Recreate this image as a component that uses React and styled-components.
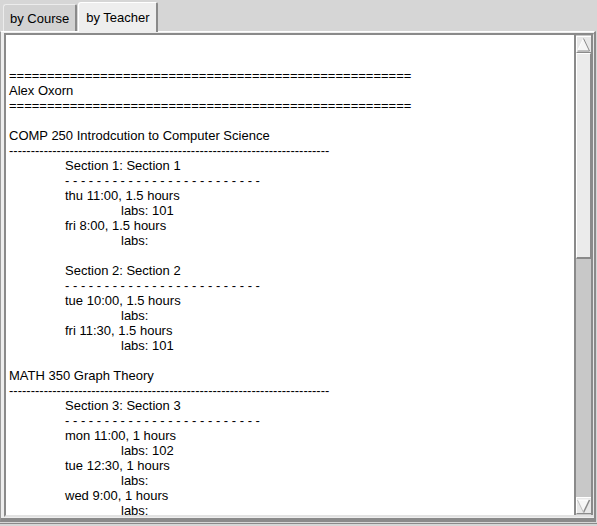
import React, {useState} from 'react';
import styled, {createGlobalStyle} from 'styled-components';

const Global = createGlobalStyle`
  html, body {
    margin: 0;
    padding: 0;
    overflow: hidden;
  }
  body {
    font-family: 'Liberation Sans', Arial, sans-serif;
  }
`

const eq = '='.repeat(53);
const dash = '-'.repeat(74);
const spaced = Array(25).fill('-').join(' ');

const report = [
  '',
  '',
  eq,
  'Alex Oxorn',
  eq,
  '',
  'COMP 250 Introdcution to Computer Science',
  dash,
  '\tSection 1: Section 1',
  '\t' + spaced,
  '\tthu 11:00, 1.5 hours',
  '\t\tlabs: 101',
  '\tfri 8:00, 1.5 hours',
  '\t\tlabs:',
  '',
  '\tSection 2: Section 2',
  '\t' + spaced,
  '\ttue 10:00, 1.5 hours',
  '\t\tlabs:',
  '\tfri 11:30, 1.5 hours',
  '\t\tlabs: 101',
  '',
  'MATH 350 Graph Theory',
  dash,
  '\tSection 3: Section 3',
  '\t' + spaced,
  '\tmon 11:00, 1 hours',
  '\t\tlabs: 102',
  '\ttue 12:30, 1 hours',
  '\t\tlabs:',
  '\twed 9:00, 1 hours',
  '\t\tlabs:',
  '',
].join('\n');

const tabs = ['by Course', 'by Teacher'];

const UpArrow = () => (
  <svg width="15" height="16" viewBox="0 0 15 16">
    <polygon points="7.5,1.5 13.5,14 1.5,14" fill="#f6f6f6"/>
    <polyline points="1.5,14 7.5,1.5" fill="none" stroke="#ffffff" strokeWidth="1"/>
    <polyline points="7.5,1.5 13.5,14 1.5,14" fill="none" stroke="#8a8a8a" strokeWidth="1"/>
  </svg>
)

const DownArrow = () => (
  <svg width="15" height="16" viewBox="0 0 15 16">
    <polygon points="1.5,2 13.5,2 7.5,14.5" fill="#f6f6f6"/>
    <polyline points="1.5,2 13.5,2" fill="none" stroke="#ffffff" strokeWidth="1"/>
    <polyline points="13.5,2 7.5,14.5" fill="none" stroke="#8a8a8a" strokeWidth="1.5"/>
    <polyline points="1.5,2 7.5,14.5" fill="none" stroke="#c0c0c0" strokeWidth="1"/>
  </svg>
)

export default function App() {
  let [active, setActive] = useState(1);
  return (
    <Window>
      <Global/>
      <TabBar>
        {tabs.map((name, i) => (
          <Tab key={name} $active={i === active} onClick={() => setActive(i)}>
            {name}
          </Tab>
        ))}
      </TabBar>
      <Panel>
        <ScrollPane>
          <TextArea>{report}</TextArea>
          <ScrollBar>
            <ArrowButton><UpArrow/></ArrowButton>
            <Thumb/>
            <Track/>
            <ArrowButton><DownArrow/></ArrowButton>
          </ScrollBar>
        </ScrollPane>
      </Panel>
      <BottomEdge/>
    </Window>
  )
}

const Window = styled.div`
  width: 597px;
  height: 526px;
  background: #d6d6d6;
  display: flex;
  flex-direction: column;
  overflow: hidden;
`
const TabBar = styled.div`
  height: 31px;
  display: flex;
  align-items: flex-end;
  padding-left: 3px;
  gap: 1px;
  position: relative;
  z-index: 1;
`
const Tab = styled.div`
  box-sizing: border-box;
  height: ${p => p.$active ? '30px' : '27px'};
  margin-bottom: ${p => p.$active ? '-1px' : '0'};
  padding: 0 6px 0 ${p => p.$active ? '7px' : '6px'};
  display: flex;
  align-items: center;
  background: ${p => p.$active ? '#eeeeee' : '#d2d2d2'};
  border-top: 1px solid ${p => p.$active ? '#ffffff' : '#ececec'};
  border-left: 1px solid ${p => p.$active ? '#ffffff' : '#ececec'};
  border-right: 2px solid #8a8a8a;
  border-top-left-radius: 3px;
  border-top-right-radius: 2px;
  font-size: 13px;
  color: #000000;
  cursor: default;
`
const Panel = styled.div`
  box-sizing: border-box;
  height: 491px;
  margin-right: 1px;
  background: #eeeeee;
  border-top: 1px solid #ffffff;
  border-left: 1px solid #9a9a9a;
  border-right: 2px solid #8a8a8a;
  border-bottom: 4px solid #8a8a8a;
  padding: 1px 0 1px 3px;
`
const ScrollPane = styled.div`
  height: 484px;
  box-sizing: border-box;
  display: flex;
  border-style: solid;
  border-width: 2px 1px 2px 2px;
  border-color: #8a8a8a #e6e6e6 #e2e2e2 #8a8a8a;
`
const TextArea = styled.pre`
  flex: 1;
  margin: 0;
  padding: 3px 0 0 3px;
  background: #ffffff;
  font-family: 'Liberation Sans', Arial, sans-serif;
  font-size: 13px;
  line-height: 15px;
  color: #000000;
  tab-size: 56px;
  -moz-tab-size: 56px;
  white-space: pre;
  overflow: hidden;
`
const ScrollBar = styled.div`
  width: 19px;
  box-sizing: border-box;
  display: flex;
  flex-direction: column;
  background: #c8c8c8;
  border-left: 2px solid #8a8a8a;
  border-right: 2px solid #8a8a8a;
  padding: 1px 0;
`
const ArrowButton = styled.div`
  height: 17px;
  box-sizing: border-box;
  background: #e8e8e8;
  border-top: 1px solid #ffffff;
  border-left: 1px solid #ffffff;
  border-bottom: 1px solid #8a8a8a;
  display: flex;
  align-items: center;
  justify-content: center;
  svg { display: block; margin-left: -1px; }
`
const Thumb = styled.div`
  height: 206px;
  box-sizing: border-box;
  background: #ebebeb;
  border-top: 1px solid #ffffff;
  border-left: 1px solid #ffffff;
  border-right: 1px solid #8a8a8a;
  border-bottom: 2px solid #8a8a8a;
`
const Track = styled.div`
  flex: 1;
`
const BottomEdge = styled.div`
  height: 1px;
  margin-top: 1px;
  background: #8a8a8a;
`
